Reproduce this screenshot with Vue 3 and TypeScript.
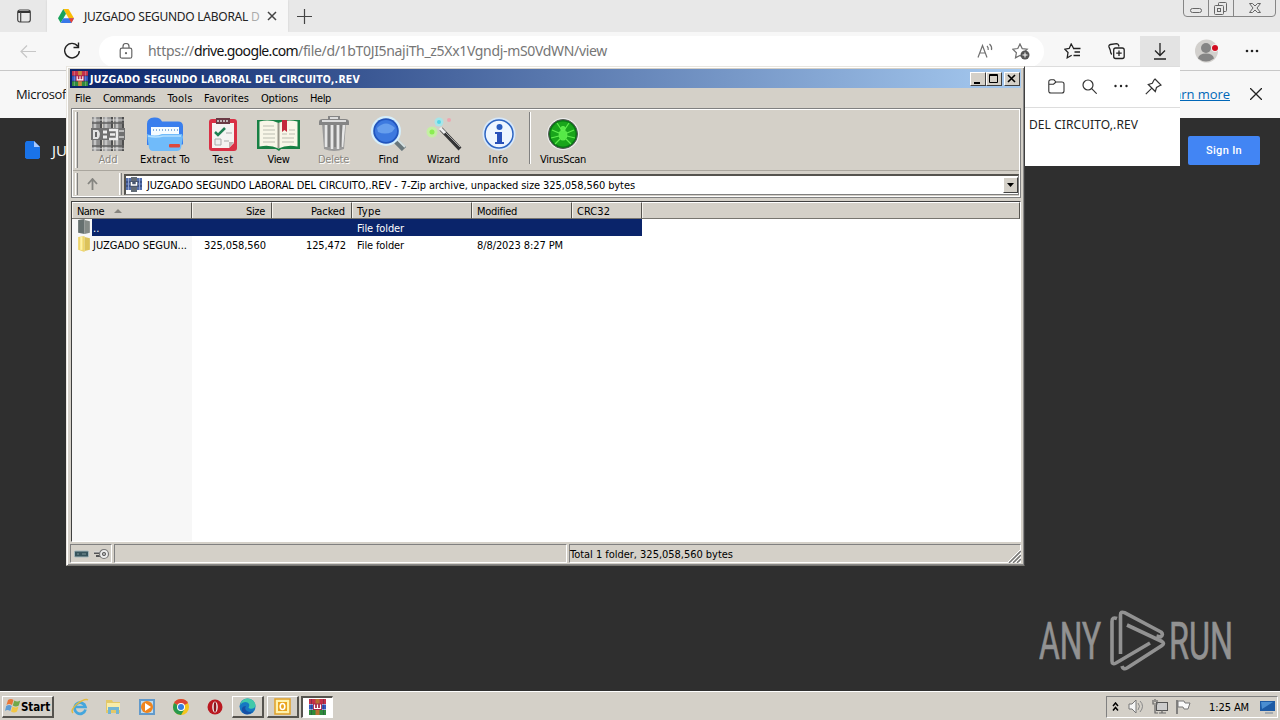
<script setup lang="ts">
// Spreads the letters of a label evenly so that it spans the given width.
const vFit = {
  mounted(el: HTMLElement, binding: { value: number }) {
    const natural = el.getBoundingClientRect().width
    const count = (el.textContent ?? '').length
    if (count > 0) el.style.letterSpacing = `${(binding.value - natural) / count}px`
  },
}

interface Tool { id: string; label: string; width: number; text: number; off?: boolean }
const menus = [
  { label: 'File', text: 16, cell: 28 },
  { label: 'Commands', text: 52, cell: 64.5 },
  { label: 'Tools', text: 25, cell: 36.5 },
  { label: 'Favorites', text: 45, cell: 57 },
  { label: 'Options', text: 37, cell: 49 },
  { label: 'Help', text: 21, cell: 40 },
]
const tools: Tool[] = [
  { id: 'add', label: 'Add', width: 54, text: 19, off: true },
  { id: 'extract', label: 'Extract To', width: 60, text: 50 },
  { id: 'test', label: 'Test', width: 56, text: 21 },
  { id: 'view', label: 'View', width: 55, text: 22 },
  { id: 'delete', label: 'Delete', width: 55, text: 31, off: true },
  { id: 'find', label: 'Find', width: 55, text: 20 },
  { id: 'wizard', label: 'Wizard', width: 55, text: 33 },
  { id: 'info', label: 'Info', width: 55, text: 20 },
  { id: 'virus', label: 'VirusScan', width: 64, text: 46 },
]
const columns = [
  { label: 'Name', text: 27 }, { label: 'Size', text: 19, right: true }, { label: 'Packed', text: 34, right: true },
  { label: 'Type', text: 24 }, { label: 'Modified', text: 40 }, { label: 'CRC32', text: 33 },
]
const books = [
  { y: 0, c: '#c4304a' }, { y: 5.5, c: '#3558c0' }, { y: 11, c: '#2f8a3c' },
]
</script>

<template>
  <div class="screen">
    <!-- Browser -->
    <div class="tabs">
      <svg class="tabmenu" width="16" height="16" viewBox="0 0 16 16"><rect x="1.700" y="2" width="12.600" height="12" rx="2.200" fill="none" stroke="#444" stroke-width="1.200"/><path d="M2 4h12" stroke="#333" stroke-width="2"/><path d="M4.700 4v10" stroke="#444" stroke-width="1.200"/></svg>
      <div class="tab">
        <svg width="16" height="14" viewBox="0 0 16 14"><path d="M5.3 0h5.2L16 9.2h-5.3z" fill="#fbbc04"/><path d="M5.3 0 8 4.7 2.7 14 0 9.2z" fill="#18a35a"/><path d="M5.3 9.2H16L13.3 14H2.7z" fill="#3978e8"/><path d="m10.7 9.2H16L13.4 14z" fill="#e94335"/></svg>
        <span class="tabtitle"><span v-fit="164">JUZGADO SEGUNDO LABORAL</span></span><span class="fade">D</span>
        <svg class="tabclose" width="10" height="10" viewBox="0 0 10 10"><path d="m1 1 8 8m0-8-8 8" stroke="#444" stroke-width="1.500"/></svg>
      </div>
      <svg class="newtab" width="15" height="15" viewBox="0 0 15 15"><path d="M7.500 0v15M0 7.500h15" stroke="#444" stroke-width="1.200"/></svg>
      <svg class="caption" width="94" height="17" viewBox="0 0 94 17" fill="none" stroke="#868686"><path d="M.5 0v13q0 3.500 3.500 3.500h85q3.500 0 3.500-3.500V0M25.500 0v16M50.500 0v16"/><g stroke="#666"><rect x="7.500" y="8.500" width="11" height="4" rx="2"/><rect x="35.500" y="2.500" width="8" height="9" rx="1"/><rect x="31.500" y="5.500" width="9" height="9" rx="1" fill="#e8e8e8"/><rect x="34.500" y="8.500" width="3" height="3"/><path d="M66.500 3.500h3l2.500 2.500 2.500-2.500h3l-3.500 4.500 3.500 4.500h-3L72 10l-2.500 2.500h-3L70 8z"/></g></svg>
    </div>
    <div class="nav">
      <svg class="back" width="16" height="13" viewBox="0 0 16 13"><path d="M16 6.500H1M7 .5l-6 6 6 6" fill="none" stroke="#c7c7c7" stroke-width="1.200"/></svg>
      <svg class="reload" width="18" height="18" viewBox="0 0 18 18"><path d="M14.800 4.200A7.300 7.300 0 1 0 16.300 9M15.500.5v5h-5" fill="none" stroke="#222" stroke-width="1.400"/></svg>
      <div class="url">
        <svg width="14" height="16" viewBox="0 0 14 16"><rect x="1.200" y="5.200" width="11.600" height="10" rx="1.800" fill="none" stroke="#666" stroke-width="1.200"/><path d="M4 5V3.500a3 3 0 0 1 6 0V5" fill="none" stroke="#666" stroke-width="1.200"/><circle cx="7" cy="10.200" r="1.100" fill="#666"/></svg>
        <span class="address"><span v-fit="46">https://</span><b v-fit="104">drive.google.com</b><span v-fit="309">/file/d/1bT0JI5najiTh_z5Xx1Vgndj-mS0VdWN/view</span></span>
        <svg class="read" width="17" height="16" viewBox="0 0 17 16" fill="none" stroke="#707070" stroke-width="1.200"><path d="m1 14.500 4.500-12 4.500 12M2.700 10h5.600M10 3q1.600 1.500 1.200 4M12.500 1q2.800 2.500 2 6"/></svg>
        <svg width="18" height="17" viewBox="0 0 18 17"><path d="m8 .9 2.200 4.700 5 .6-3.700 3.400.9 5.200L8 12.400l-4.500 2.400.9-5.100L.8 6.200l5-.7z" fill="none" stroke="#707070" stroke-width="1.200"/><circle cx="13" cy="12" r="4.500" fill="#555"/><path d="M10.500 12h5M13 9.500v5" stroke="#fff"/></svg>
      </div>
      <svg class="favorite" width="17" height="17" viewBox="0 0 17 17" fill="none" stroke="#222" stroke-width="1.300"><path d="M9.500 5.300 7.200 1 5.200 5.500.8 6.200 4 9.500l-.8 5.200 4.500-2.400M9 5.500h7.500M10.500 9H16M9.500 12.500H16"/></svg>
      <svg class="collect" width="17" height="17" viewBox="0 0 17 17" fill="none" stroke="#222" stroke-width="1.300"><path d="M3.700 11.500Q2.500 10 2.200 7L1 4q-.5-2 1.500-2.500L8.500.7q1.500 0 2 1.300l.5 1.500"/><rect x="5.700" y="5" width="10.500" height="10.500" rx="2"/><path d="M11 7.500v5.500M8.200 10.200h5.500"/></svg>
      <div class="download"><svg width="14" height="17" viewBox="0 0 14 17"><path d="M7 0v12M2 7.500l5 5 5-5M1 16h12" fill="none" stroke="#222" stroke-width="1.300"/></svg></div>
      <svg class="avatar" width="24" height="24" viewBox="0 0 24 24"><circle cx="11.500" cy="12" r="11.500" fill="#d2d0cd"/><circle cx="11" cy="9" r="5" fill="#858585"/><path d="M3 19.500q1-5 8-5t8 5q-8 6-16 0z" fill="#858585"/><circle cx="20" cy="9" r="3.800" fill="#f7f7f7"/><circle cx="20" cy="9" r="3" fill="#d20c20"/></svg>
      <svg width="14" height="4" viewBox="0 0 14 4"><g fill="#222"><circle cx="2" cy="2" r="1.300"/><circle cx="7" cy="2" r="1.300"/><circle cx="12" cy="2" r="1.300"/></g></svg>
    </div>
    <div class="notice">
      <span class="lead" v-fit="50">Microsof</span><a v-fit="70">Learn more</a>
      <svg width="12" height="12" viewBox="0 0 12 12"><path d="m0 0 12 12M12 0 0 12" stroke="#222" stroke-width="1.300"/></svg>
    </div>
    <div class="page">
      <svg width="15" height="18" viewBox="0 0 15 18"><path d="M1.500 0H9l6 6v10.500L13.500 18h-12L0 16.500v-15z" fill="#1a73e8"/><path d="M9 0v6h6z" fill="#a8caff"/></svg>
      <span class="doc">JU</span>
      <div class="signin"><span v-fit="36">Sign In</span></div>
    </div>

    <!-- Downloads flyout -->
    <div class="flyout">
      <div class="flyhead">
        <svg width="17" height="15" viewBox="0 0 17 15"><path d="M.8 3q0-2.200 2.200-2.200h3L8 3h5.800Q16 3 16 5v7q0 2-2.200 2H3Q.8 14 .8 12zM1 5.200h4.500L8 3" fill="none" stroke="#333" stroke-width="1.100"/></svg>
        <svg width="15" height="15" viewBox="0 0 15 15"><circle cx="6" cy="6" r="5" fill="none" stroke="#333" stroke-width="1.200"/><path d="m9.700 9.700 5 5" stroke="#333" stroke-width="1.200"/></svg>
        <svg width="14" height="4" viewBox="0 0 14 4"><g fill="#222"><circle cx="1.500" cy="2" r="1.200"/><circle cx="7" cy="2" r="1.200"/><circle cx="12.500" cy="2" r="1.200"/></g></svg>
        <svg width="17" height="17" viewBox="0 0 17 17"><path d="m10 1 6 6-1.500.8-3 1.700-1.200 4-7-7 4-1.200L9 2zM6.800 10.200.8 16.200" fill="none" stroke="#333" stroke-width="1.200"/></svg>
      </div>
      <div class="flybody"><span v-fit="109">DEL CIRCUITO,.REV</span></div>
    </div>

    <!-- Archive manager -->
    <div class="window">
      <div class="titlebar">
        <svg class="wr" width="16" height="15" viewBox="0 0 17 16"><g v-for="b in books" :key="b.y"><rect :y="b.y" width="17" height="5" :fill="b.c"/><path :d="`M2.500 ${b.y}v5M14.500 ${b.y}v5`" stroke="#fff" stroke-opacity=".3"/></g><path d="M6.500 0h4v16h-4z" fill="#c58a3c"/><rect x="4" y="4.500" width="9" height="6.500" fill="#b5264c"/><path d="M5.500 5.500v4h6v-4M8.500 5.500v4" fill="none" stroke="#fff" stroke-width="1.200"/></svg>
        <b v-fit="270">JUZGADO SEGUNDO LABORAL DEL CIRCUITO,.REV</b>
        <div class="winbuttons">
          <i><svg width="14" height="12"><path d="M3 9h6v2H3z"/></svg></i>
          <i><svg width="14" height="12"><path d="M2.500 1.500h8v8h-8zM2 2.500h9" fill="none" stroke="#000"/></svg></i>
          <i class="x"><svg width="14" height="12"><path d="m3 2 7 7m0-7-7 7" stroke="#000" stroke-width="1.600"/></svg></i>
        </div>
      </div>
      <div class="menubar"><span v-for="m in menus" :key="m.label" class="menu" :style="{ width: m.cell + 'px' }"><span v-fit="m.text">{{ m.label }}</span></span></div>
      <div class="bars">
        <div class="toolbar">
          <i class="grip"></i>
          <template v-for="t in tools" :key="t.id">
            <i v-if="t.id === 'virus'" class="split"></i>
            <div class="tool" :class="{ off: t.off }" :style="{ width: t.width + 'px' }">
              <svg v-if="t.id === 'add'" width="34" height="34" viewBox="0 0 34 34"><path d="M1 0h10v34H1z" fill="#8d8d8d"/><path d="M12 0h10v34H12z" fill="#9b9b9b"/><path d="M23 0h10v34H23z" fill="#858585"/><path d="M4 0v34M15 0v34M26 0v34" stroke="#c4c4c4" stroke-width="2.500"/><path d="M10 0v34M21 0v34M32 0v34" stroke="#4f4f4f" stroke-width="2"/><path d="M1 6h32M1 29h32" stroke="#5f5f5f" stroke-width="1.500"/><path d="M1 3h32M1 31.500h32" stroke="#ddd" stroke-opacity=".6" stroke-width="1.500"/><path d="M0 11h34v12H0z" fill="#707070"/><path d="M2 13h5q4 4 0 9H2z" fill="#e2e2e2"/><path d="M5 15v5" stroke="#666" stroke-width="2"/><path d="M12 15h4M12 20h4" stroke="#eee" stroke-width="3"/><path d="M18 13h8v9h-8M19 17.500h5" fill="none" stroke="#eee" stroke-width="2.500"/><path d="M28 14h5M28 20h5" stroke="#bbb" stroke-width="2"/></svg>
              <svg v-else-if="t.id === 'extract'" width="38" height="34" viewBox="0 0 38 34"><path d="M1 28V7q0-6 7-6.500 6-.5 8 4h16q5 0 5 5v18z" fill="#397eed"/><path d="M5 10h28v12H5z" fill="#f4fbff"/><path d="M7 13h25" stroke="#8ab2dd" stroke-width="2" stroke-dasharray="1 2"/><path d="M1 17q8 3 15 0h20l1 3-2 11q-1 3-4 3H7q-3 0-4-3z" fill="#70bbfa"/><path d="m2 19q8 2 15 0h18" fill="none" stroke="#b3e0ff" stroke-width="1.500"/><rect x="23" y="27" width="11" height="3.500" rx="1" fill="#df493d"/></svg>
              <svg v-else-if="t.id === 'test'" width="30" height="34" viewBox="0 0 30 34"><rect x="1" y="2" width="28" height="32" rx="3" fill="#d93045"/><path d="M4 6h22v20l-5 5H4z" fill="#f5f3f2"/><path d="M26 25h-5v6z" fill="#bcb4b4"/><path d="M8 1h14v6H8z" fill="#6b3a44"/><path d="M9 4h12" stroke="#ddd" stroke-width="1.500" stroke-dasharray="2 1"/><path d="m7 15 3 3 7-7" fill="none" stroke="#208053" stroke-width="2.500"/><path d="M7 22h6v6H7z" fill="#eee" stroke="#aaa"/><path d="M18 16h6M16 24h5" stroke="#aaa"/></svg>
              <svg v-else-if="t.id === 'view'" width="43" height="34" viewBox="0 0 43 34"><path d="M0 3h43v29H24l-2 2-3-2H0z" fill="#178044"/><path d="M2.500 4.500Q13 2 21.500 6q8-4 19-1.500v25q-11-2-19 2-8-4-19-2z" fill="#f8f6e8"/><path d="M21.500 6v25" stroke="#9b998c" stroke-width="2"/><path d="M6 9h11M6 13h12M6 17h12M6 21h12M6 25h12M25 21h12M25 25h12M32 13h6M32 17h6M25 17h5" stroke="#d0d1c4" stroke-width="1.300"/><path d="M25 3h5v12l-2.500-2-2.500 2z" fill="#c3293c"/></svg>
              <svg v-else-if="t.id === 'delete'" width="32" height="36" viewBox="0 0 32 36"><path d="M4 8h24l-2 26q-10 4-20 0z" fill="#999"/><path d="M8 10v22M14 10v24M20 10v24M26 10l-2 22" stroke="#e7e7e7" stroke-width="2.500"/><path d="M11 10v22M17 10v22M23 10v22" stroke="#666"/><path d="M1 7q0-3 4-3h5V1h12v3h5q4 0 4 3v3H1z" fill="#858585"/><path d="M4 6h24M12 3h8" stroke="#ddd" stroke-width="2"/></svg>
              <svg v-else-if="t.id === 'find'" width="37" height="36" viewBox="0 0 37 36"><path d="m24 24 10 10" stroke="#69777c" stroke-width="6"/><path d="m27 24 8 8" stroke="#d7e2e3" stroke-width="2"/><circle cx="16" cy="16" r="15" fill="#d5eefb"/><circle cx="16" cy="16" r="12.800" fill="#2155bd"/><circle cx="16" cy="16" r="11" fill="#3d79df"/><path d="M7 13q9-9 18 0l-3 4q-7 3-14 0z" fill="#669eed"/></svg>
              <svg v-else-if="t.id === 'wizard'" width="36" height="36" viewBox="0 0 36 36"><path d="m15 14 19 20" stroke="#353536" stroke-width="4"/><path d="m16 14 18 18" stroke="#a7a7a7"/><path d="m14 13 5 5" stroke="#eee" stroke-width="3"/><circle cx="6" cy="17" r="5.500" fill="#c4efa3"/><circle cx="6" cy="17" r="2.500" fill="#8bed52"/><circle cx="13" cy="7" r="4.500" fill="#a8e5e8"/><circle cx="13" cy="7" r="2" fill="#54d5e7"/><circle cx="23" cy="5" r="2" fill="#eda7b0"/></svg>
              <svg v-else-if="t.id === 'info'" width="34" height="34" viewBox="0 0 34 34"><circle cx="17" cy="17" r="16.500" fill="#d7e8fa"/><circle cx="17" cy="17" r="14" fill="#edf5ff" stroke="#2d64c2" stroke-width="1.500"/><circle cx="17.500" cy="10" r="3" fill="#285cc0"/><path d="M13 15h7v10h2v2h-9v-2h2v-8h-2z" fill="#2851ba"/></svg>
              <svg v-else width="34" height="34" viewBox="0 0 34 34"><circle cx="17" cy="17" r="16" fill="#eee"/><circle cx="17" cy="17" r="14.500" fill="#087815" stroke="#555"/><circle cx="17" cy="17" r="12.500" fill="#19a51b"/><g stroke="#60ed4e" stroke-width="1.200" fill="none"><path d="m11 6 4 6m8-6-4 6M6 13l7 3m15-3-7 3M5 21l8-2m16 2-8-2M9 27l5-5m11 5-5-5"/><ellipse cx="17" cy="18" rx="3.800" ry="5" fill="#56e947"/><circle cx="17" cy="11.500" r="2" fill="#56e947"/></g></svg>
              <span v-fit="t.text">{{ t.label }}</span>
            </div>
          </template>
        </div>
        <div class="pathbar">
          <i class="grip small"></i>
          <svg class="up" width="13" height="12" viewBox="0 0 13 12"><path d="M6.500 12V2M2 6l4.500-5L11 6" fill="none" stroke="#858580" stroke-width="1.800"/></svg>
          <i class="grip small"></i>
          <div class="combo">
            <svg width="16" height="15" viewBox="0 0 16 15"><path d="M0 1h5v12H0zM11 1h5v12h-5z" fill="#536eac"/><path d="M0 5h16M0 9h16" stroke="#263965"/><path d="M2.500 1v12M13.500 1v12" stroke="#91a3cc"/><path d="M5 0h6v15H5z" fill="#626b75"/><path d="M4 4h8v6H4z" fill="#49576f"/><path d="M5.500 5v3h5V5" fill="none" stroke="#fff" stroke-width="1.500"/></svg>
            <span v-fit="488">JUZGADO SEGUNDO LABORAL DEL CIRCUITO,.REV - 7-Zip archive, unpacked size 325,058,560 bytes</span>
            <i class="drop"><svg width="7" height="4"><path d="M0 0h7L3.500 4z"/></svg></i>
          </div>
        </div>
      </div>
      <div class="list">
        <div class="grid head">
          <div v-for="c in columns" :key="c.label" :class="{ right: c.right }"><span v-fit="c.text">{{ c.label }}</span><svg v-if="c.label === 'Name'" class="sort" width="8" height="4"><path d="M4 0 8 4H0z" fill="#87857f"/></svg></div>
          <div></div>
        </div>
        <div class="grid row selected">
          <div class="name"><i class="foldercell"><svg width="14" height="16" viewBox="0 0 13 15"><path d="M1 1 7 0v14l-6-1z" fill="#66706f"/><path d="m7 1 5 1v11l-5 1z" fill="#858b87"/></svg></i><span>..</span></div>
          <div></div><div></div><div><span v-fit="47">File folder</span></div><div></div><div></div>
        </div>
        <div class="grid row">
          <div class="name"><i class="foldercell"><svg width="14" height="16" viewBox="0 0 13 15"><path d="M1 1 7 0v15l-6-2z" fill="#efd66d"/><path d="m7 1 5 1v11l-5 1z" fill="#dcc25a"/><path d="M4 1v12" stroke="#fff2a7" stroke-width="2"/></svg></i><span v-fit="94">JUZGADO SEGUN...</span></div>
          <div class="right"><span v-fit="62">325,058,560</span></div><div class="right"><span v-fit="40">125,472</span></div><div><span v-fit="47">File folder</span></div><div><span v-fit="86">8/8/2023 8:27 PM</span></div><div></div>
        </div>
        <div class="shade"></div>
      </div>
      <div class="status">
        <div class="icons"><svg width="37" height="12" viewBox="0 0 37 12"><rect x=".5" y="3" width="14" height="6" rx="1" fill="#36545d" stroke="#a5b8bd"/><path d="M3 6h2M8 6h4" stroke="#7d9599"/><path d="M20 5h9M22 8h6" stroke="#555" stroke-width="2"/><path d="M20 4h8" stroke="#ddd"/><circle cx="30" cy="6" r="4.500" fill="#eee" stroke="#777" stroke-width="1.200"/><circle cx="30" cy="6" r="1.700" fill="#aaa" stroke="#666"/></svg></div>
        <div class="blank"></div>
        <div class="total"><span v-fit="163">Total 1 folder, 325,058,560 bytes</span></div>
        <svg class="resize" width="13" height="13" viewBox="0 0 13 13"><path d="M1 13 13 1M5 13l8-8M9 13l4-4" stroke="#777" stroke-width="1.400"/><path d="M0 12 12 0M4 12l8-8M8 12l4-4" stroke="#fff"/></svg>
      </div>
    </div>

    <!-- Watermark -->
    <div class="brand">
      <svg width="200" height="64" viewBox="0 0 200 64"><g fill="#929292" stroke="#929292" stroke-width=".7" font-family="Roboto, sans-serif" font-size="51"><text x="0" y="49" textLength="62" lengthAdjust="spacingAndGlyphs">ANY</text><text x="130" y="49" textLength="64" lengthAdjust="spacingAndGlyphs">RUN</text></g><g fill="none" stroke="#929292" stroke-width="3.600" stroke-linejoin="round"><path d="M81.500 44V5q0-4 4-2.300L122 22q3 2.500-.5 5l-4-1"/><path d="M78 8.500q-5-2-5 3V51q0 4 4 2l34-20"/><path d="m88 15 35 16.500q3 2 0 4L88 58q-4 2-5-2"/></g></svg>
    </div>

    <!-- Taskbar -->
    <div class="taskbar">
      <div class="start"><svg width="16" height="16" viewBox="0 0 16 16"><path d="M3 2q3-2 5.500 0L7 7Q4 5 1.500 7z" fill="#e97635"/><path d="M9.300 2.500q3 2 6 0l-1.500 5q-3 2-6 0z" fill="#72a849"/><path d="M1.200 8q3-2 5.500 0l-1.400 5q-3-2-5.300 0z" fill="#5d9bd3"/><path d="M7.500 8.500q3 2 6 0l-1.500 5q-3 2-6 0z" fill="#f2c644"/></svg><b v-fit="29">Start</b></div>
      <div class="quick"><svg width="18" height="18" viewBox="0 0 18 18"><path d="M14.500 11.500A5.500 5.500 0 1 1 14.500 9H5" fill="none" stroke="#45a6dd" stroke-width="2.700"/><path d="M2 15q-3-3 4-9 8-6 11-4" fill="none" stroke="#e2ba3f" stroke-width="1.500"/></svg></div>
      <div class="quick"><svg width="17" height="17" viewBox="0 0 17 17"><path d="M1 2h6l1 2h7v11H1z" fill="#e3c868"/><path d="M2 5h13v7H2z" fill="#f8eca9"/><path d="M3 16V9h11v7h-3v-4H6v4H3z" fill="#72b5d4"/></svg></div>
      <div class="quick"><svg width="16" height="16" viewBox="0 0 16 16"><path d="M0 0h16v16H0z" fill="#629acb"/><path d="M2 2h12v12H2z" fill="#bfdcf0"/><circle cx="8" cy="8" r="6" fill="#ef841d"/><path d="m6 4 6 4-6 4z" fill="#fff"/></svg></div>
      <div class="quick"><svg width="16" height="16" viewBox="0 0 16 16"><circle cx="8" cy="8" r="8" fill="#f4c51d"/><path d="M8 8 1 4q2-4 7-4 5 0 7 4z" fill="#da4437"/><path d="M1 4q-3 7 3 11l4 1 3-5-3-3z" fill="#28994d"/><circle cx="8" cy="8" r="4" fill="#fff"/><circle cx="8" cy="8" r="3" fill="#347de0"/></svg></div>
      <div class="quick"><svg width="16" height="16" viewBox="0 0 16 16"><circle cx="8" cy="8" r="7.500" fill="#ba1820"/><ellipse cx="8" cy="8" rx="2.800" ry="5.500" fill="#eee"/><ellipse cx="8" cy="8" rx="1.300" ry="5" fill="#8d151c"/></svg></div>
      <div class="task edge"><svg width="17" height="17" viewBox="0 0 17 17"><circle cx="8.500" cy="8.500" r="8" fill="#1678c2"/><path d="M1 7Q3 0 9 .5q7 1 7.500 7-1 4-6 3l-1-1q2-3-1-5Q4 3 1 7z" fill="#42c9aa"/><path d="M7 8q-2 3 1 5t6 0q-3 4-8 3-4-2-3-6 1-2 4-2z" fill="#174fa5"/></svg></div>
      <div class="task outlook"><svg width="17" height="17" viewBox="0 0 17 17"><path d="M1 1h15v15H1z" fill="#fff2ad" stroke="#e0a028" stroke-width="1.500"/><path d="M4 4h9v9H4z" fill="#eaa41d"/><ellipse cx="8.500" cy="8.500" rx="2.300" ry="3" fill="none" stroke="#fff" stroke-width="1.600"/></svg></div>
      <div class="task active"><svg width="17" height="16" viewBox="0 0 17 16"><g v-for="b in books" :key="b.y"><rect :y="b.y" width="17" height="5" :fill="b.c"/><path :d="`M2.500 ${b.y}v5M14.500 ${b.y}v5`" stroke="#242445" stroke-opacity=".35"/></g><path d="M6.500 0h4v16h-4z" fill="#b97032"/><rect x="4" y="4.500" width="9" height="6.500" fill="#a82748"/><path d="M5.500 5.500v4h6v-4M8.500 5.500v4" fill="none" stroke="#fff" stroke-width="1.200"/></svg></div>
      <div class="tray">
        <svg width="7" height="10" viewBox="0 0 7 10"><path d="m1 4 2.500-3L6 4M1 8.500l2.500-3 2.500 3" fill="none" stroke="#000" stroke-width="1.500"/></svg>
        <svg class="sound" width="17" height="15" viewBox="0 0 17 15"><path d="M1 5h3l4-4v13l-4-4H1z" fill="#f5f5f5" stroke="#777"/><path d="M10 4q3 3 0 7M12 2q5 5 0 11" fill="none" stroke="#888"/></svg>
        <svg class="net" width="16" height="15" viewBox="0 0 16 15"><rect x="4.500" y="3.500" width="11" height="8" fill="#ccc" stroke="#555"/><path d="M7 14h7M10 11v3M3 6v8h3M1 1v4h4V1M3 0v3" fill="none" stroke="#666" stroke-width="1.200"/></svg>
        <svg class="flag" width="16" height="15" viewBox="0 0 16 15"><path d="M2 1v14" stroke="#666" stroke-width="1.500"/><path d="M3 2h6l1 2h5l-2 6H9L8 8H3z" fill="#fafafa" stroke="#777"/></svg>
        <span v-fit="40">1:25 AM</span>
        <svg class="desk" width="15" height="14" viewBox="0 0 15 14"><path d="M0 1h15v10H0z" fill="#1e5ba5"/><path d="M1 2h12L2 9z" fill="#4b8ed1"/><path d="M5 13h8" stroke="#728499"/></svg>
      </div>
    </div>
  </div>
</template>

<style>
html, body { margin: 0; overflow: hidden; }
</style>
<style scoped>
.screen { position: relative; width: 1280px; height: 720px; display: flex; flex-direction: column; overflow: hidden; box-sizing: border-box; font: 13px "Open Sans", "Noto Sans", sans-serif; color: #222; background: #2f2f2f; }
.screen * { box-sizing: border-box; }
svg { display: block; flex: none; }
span, b, a { display: inline-block; white-space: pre; flex: none; }
i { font-style: normal; flex: none; }
.tabs { height: 32px; background: #e8e8e8; display: flex; align-items: center; flex: none; }
.tabmenu { margin-left: 16px; }
.tab { width: 241px; height: 32px; margin-left: 15px; padding-left: 11px; background: #f7f7f7; display: flex; align-items: center; box-shadow: 0 0 2px #ccc; }
.tabtitle { margin-left: 10px; width: 167px; font: 12px "Noto Sans", sans-serif; }
.fade { font-size: 12px; color: #aaa; width: 12px; }
.tabclose { margin-left: 4px; }
.newtab { margin-left: 9px; }
.caption { margin: 0 3px 0 auto; align-self: flex-start; }
.nav { height: 39px; background: #f7f7f7; border-bottom: 1px solid #c8c8c8; display: flex; align-items: center; flex: none; }
.back { margin-left: 20px; }
.reload { margin-left: 27px; }
.url { width: 945px; height: 31px; margin-left: 18px; border-radius: 16px; background: #fff; display: flex; align-items: center; padding-left: 20px; }
.address { margin-left: 15px; font: 14px "Noto Sans", sans-serif; color: #767676; width: 829px; height: 20px; line-height: 20px; display: flex; }
.address b { color: #111; font-weight: 400; }
.read { margin-right: 18px; }
.favorite { margin-left: 20px; }
.collect { margin-left: 27px; }
.download { width: 40px; height: 31px; margin-left: 15px; background: #e3e3e3; display: flex; justify-content: center; align-items: center; }
.avatar { margin: 0 26px 0 15px; }
.notice { height: 47px; background: #f7f7f7; display: flex; align-items: center; padding: 0 18px 2px 16px; font-size: 13px; flex: none; color: #111; }
.lead { margin-right: auto; }
.notice a { color: #0067b8; text-decoration: underline; margin-right: 20px; }
.page { height: 64px; display: flex; align-items: center; padding: 0 20px 0 25px; flex: none; }
.doc { margin-left: 12px; color: #fff; font-size: 15px; }
.signin { width: 72px; height: 29px; margin-left: auto; border-radius: 2px; background: #4285f4; color: #fff; display: flex; align-items: center; justify-content: center; font: 500 11px Roboto, sans-serif; }
.flyout { position: absolute; left: 820px; top: 66px; width: 360px; height: 100px; background: #fff; border-top: 1px solid #ddd; }
.flyhead { height: 41px; border-bottom: 1px solid #ddd; display: flex; align-items: center; justify-content: flex-end; gap: 17px; padding: 0 18px 2px 0; }
.flybody { display: flex; justify-content: flex-end; padding: 8px 42px 0 0; font: 12px/18px "Noto Sans", sans-serif; }
.window { position: absolute; left: 66px; top: 66px; width: 959px; height: 500px; padding: 2px 3px 1px 3px; background: #d4d0c8; border: 1px solid #e9e6df; border-right-color: #404040; border-bottom-color: #77756f; box-shadow: inset 1px 1px #fff, inset -1px -1px #888; font: 11px "DejaVu Sans Condensed", "DejaVu Sans", sans-serif; color: #000; display: flex; flex-direction: column; }
.titlebar { height: 19px; display: flex; align-items: center; background: linear-gradient(90deg, #0a246a, #a6caf0); color: #fff; flex: none; }
.wr { margin: 0 2px 0 2px; }
.titlebar b { font-size: 10.500px; }
.winbuttons { display: flex; margin: 0 1px 0 auto; }
.winbuttons i { width: 16px; height: 14px; background: #d4d0c8; border: 1px solid #fff; border-right-color: #404040; border-bottom-color: #404040; overflow: hidden; }
.winbuttons .x { margin-left: 2px; }
.menubar { height: 20px; display: flex; align-items: center; padding: 1px 0 0 5px; flex: none; }
.menu { height: 18px; line-height: 18px; }
.bars { height: 90px; flex: none; margin: 0 0 0 1px; border: 1px solid #808080; box-shadow: inset 1px 1px #fff, inset -1px -1px #fff; padding-top: 2px; }
.toolbar { height: 60px; border-bottom: 1px solid #aaa69e; display: flex; padding: 1px 0 0 2px; margin: 0 1px; }
.grip { width: 3px; height: 56px; margin-right: 3px; background: #d4d0c8; border-left: 1px solid #fff; border-right: 1px solid #808080; }
.small { height: 22px; margin: 0; }
.tool { display: flex; flex-direction: column; align-items: center; justify-content: flex-end; height: 55px; gap: 2px; line-height: 14px; }
.off { color: #88857e; text-shadow: 1px 1px #fff; }
.split { width: 2px; height: 52px; margin: 0 0 0 3px; border-left: 1px solid #808080; border-right: 1px solid #fff; }
.pathbar { height: 25px; display: flex; align-items: center; padding: 1px 1px 0 3px; }
.up { margin: 0 20px 0 8px; }
.combo { margin-left: 2px; flex: 1; height: 21px; background: #fff; border: 1px solid #808080; border-top: 2px solid #55534e; border-left: 2px solid #55534e; display: flex; align-items: center; }
.combo span { margin-left: 5px; padding-top: 1px; }
.drop { width: 15px; height: 16px; margin-left: auto; display: flex; align-items: center; justify-content: center; background: #d4d0c8; border: 1px solid #fff; border-right-color: #404040; border-bottom-color: #404040; }
.list { margin: 3px 0 0 1px; height: 341px; border: 1px solid #fff; border-top: 1px solid #404040; border-left: 1px solid #404040; background: #fff; flex: none; display: flex; flex-direction: column; }
.grid { display: grid; grid-template-columns: 120px 80px 80px 120px 100px 70px 1fr; flex: none; }
.grid > div { padding: 1px 6px 0 5px; display: flex; align-items: center; }
.grid > .right { justify-content: flex-end; }
.head { height: 17px; background: #d4d0c8; }
.head > div { border-right: 1px solid #55534e; border-bottom: 1px solid #77756f; border-top: 1px solid #fff; box-shadow: inset 1px 0 #f5f2eb; }
.sort { margin-left: 10px; }
.row { height: 17px; }
.grid > .name { padding: 1px 0 0; background: #f7f7f7; }
.foldercell { width: 20px; height: 17px; margin: -1px 1px 0 0; padding: 0 0 0 5px; background: #f7f7f7; }
.selected { width: 570px; background: #0a246a; color: #fff; }
.selected > .name { background: #0a246a; }
.shade { width: 120px; flex: 1; background: #f7f7f7; }
.status { position: relative; height: 20px; margin: 2px 0 0 0; display: flex; gap: 2px; flex: none; }
.status > div { border: 1px solid #808080; border-right-color: #fff; border-bottom-color: #fff; height: 19px; display: flex; align-items: center; padding-top: 1px; }
.status > .icons { width: 42px; padding-left: 3px; }
.blank { width: 453px; }
.total { flex: 1; }
.resize { position: absolute; right: 0; bottom: 1px; }
.brand { position: absolute; left: 1039px; top: 610px; }
.taskbar { height: 29px; margin-top: auto; border-top: 1px solid #fff; background: #d4d0c8; display: flex; align-items: center; font: 11px "DejaVu Sans Condensed", "DejaVu Sans", sans-serif; color: #000; flex: none; padding: 1px 2px 0; }
.start, .task { border: 1px solid #fff; border-right: 2px solid #55534e; border-bottom: 2px solid #55534e; height: 22px; display: flex; align-items: center; justify-content: center; }
.start { width: 52px; margin-right: 9px; }
.start b { font-size: 11.500px; padding-top: 1px; }
.quick { width: 33.700px; display: flex; justify-content: center; }
.task { width: 32px; margin-right: 2.500px; }
.edge { margin-left: 1px; }
.active { background: #fff; border-color: #55534e #fff #fff #55534e; border-width: 2px 1px 1px 2px; }
.tray { width: 172px; height: 22px; margin-left: auto; border: 1px solid #808080; border-right-color: #fff; border-bottom-color: #fff; display: flex; align-items: center; padding-left: 5px; }
.sound { margin-left: 9px; }
.net { margin-left: 7px; }
.flag { margin-left: 7px; margin-right: 18px; }
.tray span { padding-top: 1px; }
.desk { margin-left: 11px; }
</style>
